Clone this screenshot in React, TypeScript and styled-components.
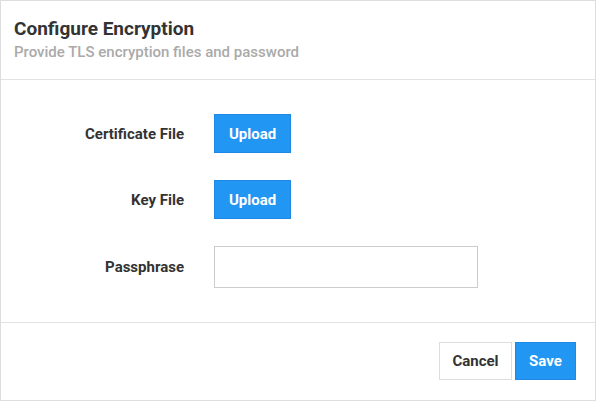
import React from "react";
import styled, { createGlobalStyle } from "styled-components";

const Global = createGlobalStyle`
  html, body { margin: 0; padding: 0; background: #fff; }
  body { font-family: Roboto, "Liberation Sans", Arial, sans-serif; }
  * { box-sizing: border-box; }
`;

const Dialog = styled.div`
  width: 596px;
  height: 401px;
  border: 1px solid #dddddd;
  display: flex;
  flex-direction: column;
  background: #fff;
`;

const Header = styled.div`
  padding: 15px 13px 0 13px;
  height: 79px;
  border-bottom: 1px solid #e2e2e2;
`;

const Title = styled.h1`
  margin: 0;
  font-size: 19px;
  line-height: 26px;
  font-weight: 700;
  color: #333333;
`;

const Subtitle = styled.div`
  font-size: 15px;
  line-height: 20px;
  font-weight: 500;
  color: #aaaaaa;
`;

const Body = styled.div`
  flex: 1;
  padding: 34px 0 0 0;
  display: grid;
  grid-template-columns: 183px auto;
  column-gap: 30px;
  row-gap: 27px;
  align-content: start;
  align-items: center;
  border-bottom: 1px solid #e2e2e2;
`;

const Label = styled.label`
  text-align: right;
  font-size: 15px;
  font-weight: 700;
  color: #333333;
`;

const Field = styled.div`
  display: flex;
`;

const Button = styled.button<{ $primary?: boolean; $w: number }>`
  width: ${(p) => p.$w}px;
  height: 38px;
  padding: 0;
  font-family: inherit;
  font-size: 15px;
  font-weight: 700;
  border-radius: 0;
  cursor: pointer;
  border: 1px solid ${(p) => (p.$primary ? "#1e88e5" : "#dddddd")};
  background: ${(p) => (p.$primary ? "#2196f3" : "#ffffff")};
  color: ${(p) => (p.$primary ? "#ffffff" : "#333333")};
`;

const UploadButton = styled(Button)`
  height: 39px;
`;

const Input = styled.input`
  width: 264px;
  height: 42px;
  border: 1px solid #cccccc;
  border-radius: 0;
  padding: 0 10px;
  font-family: inherit;
  font-size: 15px;
  outline: none;
`;

const Footer = styled.div`
  height: 77px;
  display: flex;
  justify-content: flex-end;
  align-items: flex-start;
  gap: 3px;
  padding: 19px 19px 0 0;
`;

export default function App() {
  return (
    <>
      <Global />
      <Dialog>
        <Header>
          <Title>Configure Encryption</Title>
          <Subtitle>Provide TLS encryption files and password</Subtitle>
        </Header>
        <Body>
          <Label>Certificate File</Label>
          <Field>
            <UploadButton $primary $w={77}>Upload</UploadButton>
          </Field>
          <Label>Key File</Label>
          <Field>
            <UploadButton $primary $w={77}>Upload</UploadButton>
          </Field>
          <Label>Passphrase</Label>
          <Field>
            <Input type="password" />
          </Field>
        </Body>
        <Footer>
          <Button $w={73}>Cancel</Button>
          <Button $primary $w={61}>Save</Button>
        </Footer>
      </Dialog>
    </>
  );
}
